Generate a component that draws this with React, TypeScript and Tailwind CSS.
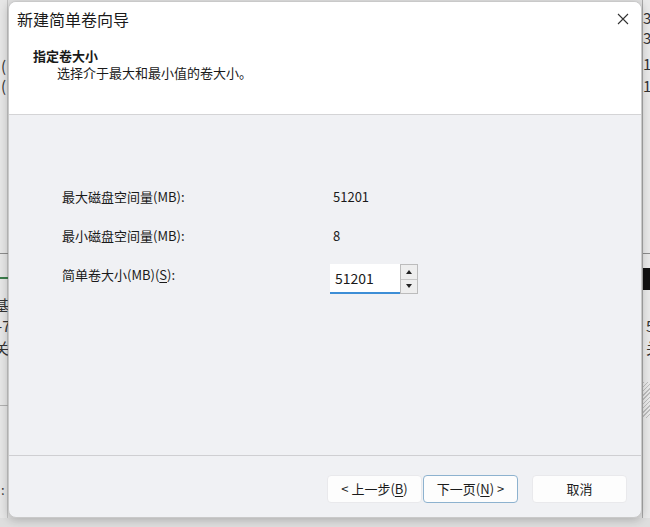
import React from "react";

const font = { fontFamily: '"Noto Sans CJK SC", "Noto Sans", sans-serif' };

function Btn({ children, primary, className = "" }: { children: React.ReactNode; primary?: boolean; className?: string }) {
  return (
    <div
      className={
        "h-[28px] w-[95px] flex items-center justify-center rounded-[4px] bg-[#fdfdfd] text-[13px] text-[#1b1b1b] border " +
        (primary ? "border-[#8db2cf]" : "border-[#e9e9ec]") +
        " " +
        className
      }
    >
      {children}
    </div>
  );
}

export default function App() {
  return (
    <div className="relative w-[650px] h-[527px] overflow-hidden bg-[#e2e2e2] text-[#1a1a1a]" style={font}>
      {/* background window fragments */}
      <div className="absolute left-0 top-0 w-[8px] h-[527px] bg-[#e6e6e6] border-r border-[#c4c4c4]" />
      <div className="absolute left-[642px] top-0 w-[8px] h-[527px] bg-[#e9e9e9] border-l border-[#a9a9a9]" />
      <div className="absolute left-0 top-[518px] w-[650px] h-[9px] bg-[#dedede]" />
      <div className="absolute left-[1px] top-[57px] text-[15px] leading-[18px] text-[#333]">(</div>
      <div className="absolute left-[1px] top-[77px] text-[15px] leading-[18px] text-[#333]">(</div>
      <div className="absolute left-[643px] top-[9px] text-[15px] leading-[18px] text-[#333]">3</div>
      <div className="absolute left-[643px] top-[29px] text-[15px] leading-[18px] text-[#333]">3</div>
      <div className="absolute left-[643px] top-[55px] text-[15px] leading-[18px] text-[#333]">1</div>
      <div className="absolute left-[643px] top-[77px] text-[15px] leading-[18px] text-[#333]">1</div>
      <div className="absolute left-0 top-[253px] w-[8px] h-[1px] bg-[#8c8c8c]" />
      <div className="absolute left-0 top-[277px] w-[8px] h-[2px] bg-[#3c7d4c]" />
      <div className="absolute left-[-6px] top-[296px] text-[15px] leading-[18px] text-[#333]">基</div>
      <div className="absolute left-[-3px] top-[317px] text-[15px] leading-[18px] text-[#333]">-7</div>
      <div className="absolute left-[-6px] top-[339px] text-[15px] leading-[18px] text-[#333]">关</div>
      <div className="absolute left-0 top-[405px] w-[8px] h-[1px] bg-[#b0b0b0]" />
      <div className="absolute left-[1px] top-[481px] text-[13px] leading-[18px] text-[#333]">:</div>
      <div className="absolute left-[643px] top-[253px] w-[7px] h-[1px] bg-[#8c8c8c]" />
      <div className="absolute left-[643px] top-[268px] w-[7px] h-[22px] bg-[#111]" />
      <div className="absolute left-[646px] top-[317px] text-[15px] leading-[18px] text-[#333]">5</div>
      <div className="absolute left-[646px] top-[339px] text-[15px] leading-[18px] text-[#333]">关</div>
      <div className="absolute left-[643px] top-[382px] w-[7px] h-[36px] bg-[repeating-linear-gradient(135deg,#bdbdbd_0px,#bdbdbd_1px,#e9e9e9_1px,#e9e9e9_3px)]" />

      {/* dialog */}
      <div className="absolute left-[8px] top-[1px] w-[634px] h-[517px] flex flex-col rounded-[8px] border border-[#c9c9c9] bg-[#f0f1f4] overflow-hidden shadow-[0_2px_10px_rgba(0,0,0,0.22)]">
        <div className="h-[112px] shrink-0 bg-white flex flex-col">
          <div className="flex items-center justify-between pt-[5px] pl-[8px] pr-[10px]">
            <div className="text-[16px] leading-[24px] text-[#1a1a1a]">新建简单卷向导</div>
            <svg width="12" height="12" viewBox="0 0 12 12" className="mr-[2px]">
              <path d="M1 1 L11 11 M11 1 L1 11" stroke="#333" strokeWidth="1.1" fill="none" />
            </svg>
          </div>
          <div className="mt-[16px] pl-[24px] text-[13px] leading-[17px] font-bold">指定卷大小</div>
          <div className="pl-[48px] text-[13px] leading-[17px]">选择介于最大和最小值的卷大小。</div>
        </div>
        <div className="h-[1px] bg-[#d4d4d6]" />
        <div className="flex-1 flex flex-col pt-[72px] pl-[53px] text-[13px]">
          <div className="flex h-[20px] items-center">
            <div className="w-[268px]">最大磁盘空间量(MB):</div>
            <div className="pl-[3px]">51201</div>
          </div>
          <div className="flex h-[20px] items-center mt-[19px]">
            <div className="w-[268px]">最小磁盘空间量(MB):</div>
            <div className="pl-[3px]">8</div>
          </div>
          <div className="flex items-start mt-[18px]">
            <div className="w-[268px] h-[20px] mt-[1px] flex items-center">
              简单卷大小(MB)(<span className="underline underline-offset-2">S</span>):
            </div>
            <div className="w-[70px] h-[30px] bg-white border-b-[2px] border-[#3d8ed6] flex items-center pl-[5px] text-[14px]">
              51201
            </div>
            <div className="w-[18px] h-[30px] bg-[#eeeeee] border border-[#bcbcbc] flex flex-col">
              <div className="flex-1 flex items-center justify-center border-b border-[#c8c8c8]">
                <svg width="6" height="4" viewBox="0 0 6 4"><path d="M0 4 L3 0 L6 4 Z" fill="#222" /></svg>
              </div>
              <div className="flex-1 flex items-center justify-center">
                <svg width="6" height="4" viewBox="0 0 6 4"><path d="M0 0 L6 0 L3 4 Z" fill="#222" /></svg>
              </div>
            </div>
          </div>
        </div>
        <div className="h-[62px] shrink-0 border-t border-[#cfcfd2] flex items-start justify-end pt-[19px] pr-[14px]">
          <Btn>&lt; 上一步(<span className="underline underline-offset-2">B</span>)</Btn>
          <Btn primary className="ml-[1px] w-[94px]">下一页(<span className="underline underline-offset-2">N</span>) &gt;</Btn>
          <Btn className="ml-[14px]">取消</Btn>
        </div>
      </div>
    </div>
  );
}
